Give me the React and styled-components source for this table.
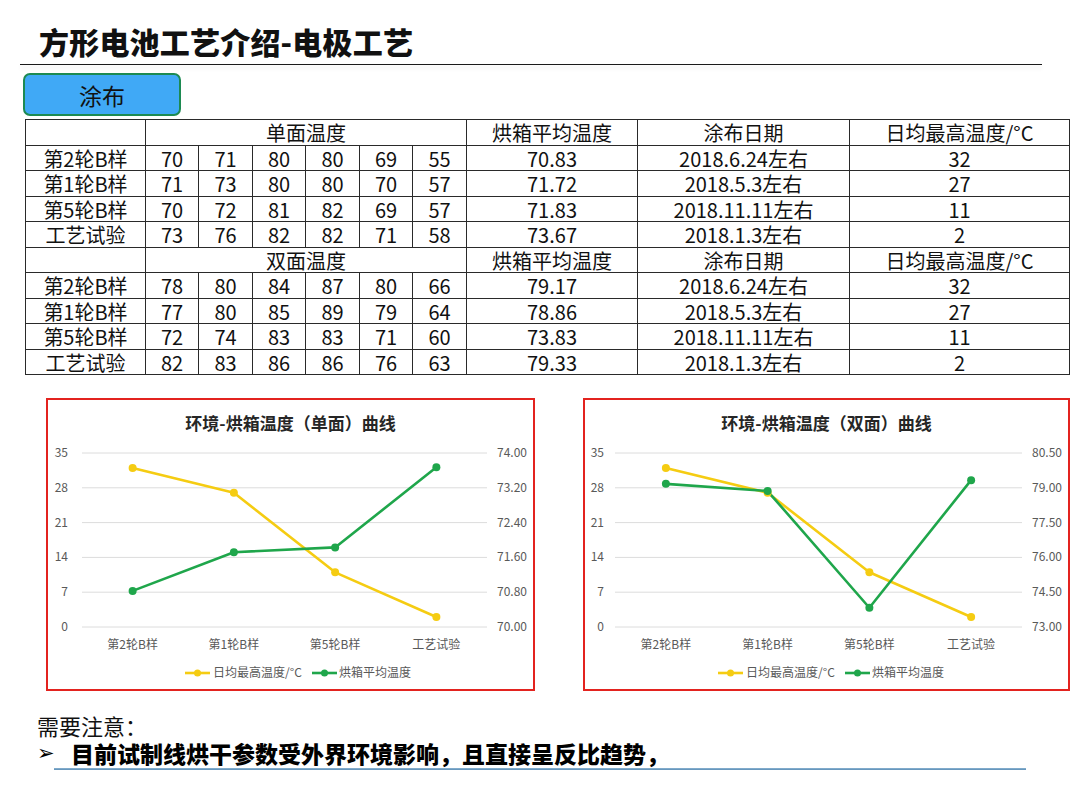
import React from 'react';
import styled, { createGlobalStyle } from 'styled-components';

const GlobalStyle = createGlobalStyle`
  html, body {
    margin: 0;
    padding: 0;
    background: #fff;
  }
  body {
    font-family: "Noto Sans CJK SC", "Noto Sans", sans-serif;
    color: #000;
  }
`;

const Page = styled.div`
  width: 1080px;
  height: 810px;
  overflow: hidden;
  background: #fff;
`;

const Title = styled.h1`
  margin: 0;
  padding: 21px 0 0 39px;
  font-size: 30px;
  line-height: 40px;
  font-weight: 900;
  letter-spacing: 0.2px;
  color: #111;
`;

const Rule = styled.div`
  margin: 3px 0 0 20px;
  width: 1022px;
  height: 0;
  border-top: 1.5px solid #1a1a1a;
  box-shadow: 0 3px 4px rgba(0, 0, 0, 0.14);
`;

const Tab = styled.div`
  margin: 8px 0 0 23px;
  width: 158px;
  height: 43px;
  box-sizing: border-box;
  display: flex;
  align-items: center;
  justify-content: center;
  background: #40a9f6;
  border: 2px solid #1d8a52;
  border-radius: 7px;
  font-size: 23px;
  color: #111;
`;

const Table = styled.table`
  margin: 3px 0 0 25px;
  width: 1044px;
  border-collapse: collapse;
  table-layout: fixed;
  font-size: 20px;
  line-height: 1;
  color: #111;

  tr {
    height: 25.5px;
  }
  td {
    border: 1px solid #2a2a2a;
    padding: 2px 0 0;
    text-align: center;
    white-space: nowrap;
  }
`;

const ChartsRow = styled.div`
  display: flex;
  gap: 48px;
  margin: 23px 0 0 46px;
`;

const ChartBox = styled.div`
  width: ${(p) => p.$w}px;
  height: 293px;
  box-sizing: border-box;
  border: 2px solid #e3231f;
  background: #fff;

  svg {
    display: block;
  }
`;

const ChartTitle = styled.text`
  font-size: 17px;
  font-weight: 700;
  fill: #262626;
`;

const AxisLabel = styled.text`
  font-size: 12px;
  fill: #595959;
`;

const Notes = styled.div`
  margin: 20px 0 0 37px;
`;

const NoteHead = styled.div`
  font-size: 22px;
  line-height: 28px;
  color: #111;
`;

const Bullet = styled.div`
  display: flex;
  align-items: center;
  height: 28px;
  font-size: 23px;
  font-weight: 900;
  color: #000;
`;

const Arrow = styled.span`
  width: 34px;
  font-family: "DejaVu Sans", sans-serif;
  font-size: 21px;
  font-weight: 400;
  line-height: 1;
`;

const Underline = styled.div`
  margin: 1px 0 0 17px;
  width: 972px;
  height: 2px;
  background: linear-gradient(#8db4d2, #5b8db6);
`;

const YELLOW = '#f5cc12';
const GREEN = '#1fa64b';
const categories = ['第2轮B样', '第1轮B样', '第5轮B样', '工艺试验'];
const dailyMax = [32, 27, 11, 2];

function LineChart({ width, title, rightTicks, rightMin, rightMax, oven, frame }) {
  const { x0, x1, y0, y1, leftEnd, rightStart, legendX } = frame;
  const leftTicks = [0, 7, 14, 21, 28, 35];
  const yL = (v) => y1 - (v / 35) * (y1 - y0);
  const yR = (v) => y1 - ((v - rightMin) / (rightMax - rightMin)) * (y1 - y0);
  const step = (x1 - x0) / 4;
  const cx = (i) => x0 + step * (i + 0.5);
  const yellowPts = dailyMax.map((v, i) => `${cx(i)},${yL(v)}`).join(' ');
  const greenPts = oven.map((v, i) => `${cx(i)},${yR(v)}`).join(' ');

  return (
    <ChartBox $w={width}>
      <svg width={width - 4} height={289}>
        <ChartTitle x={(width - 4) / 2} y={30} textAnchor="middle">
          {title}
        </ChartTitle>
        {leftTicks.map((t, i) => {
          const y = yL(t);
          return (
            <g key={t}>
              <line x1={x0} x2={x1} y1={y} y2={y} stroke="#dcdcdc" strokeWidth="1" />
              <AxisLabel x={leftEnd} y={y + 4} textAnchor="end">
                {t}
              </AxisLabel>
              <AxisLabel x={rightStart} y={y + 4}>
                {rightTicks[i]}
              </AxisLabel>
            </g>
          );
        })}
        {categories.map((c, i) => (
          <AxisLabel key={c} x={cx(i)} y={249} textAnchor="middle">
            {c}
          </AxisLabel>
        ))}
        <polyline points={yellowPts} fill="none" stroke={YELLOW} strokeWidth="2.6" strokeLinejoin="round" />
        <polyline points={greenPts} fill="none" stroke={GREEN} strokeWidth="2.6" strokeLinejoin="round" />
        {dailyMax.map((v, i) => (
          <circle key={'y' + i} cx={cx(i)} cy={yL(v)} r="4" fill={YELLOW} />
        ))}
        {oven.map((v, i) => (
          <circle key={'g' + i} cx={cx(i)} cy={yR(v)} r="4" fill={GREEN} />
        ))}
        <g transform={`translate(${legendX}, 273)`}>
          <line x1="0" x2="25" y1="0" y2="0" stroke={YELLOW} strokeWidth="2.6" />
          <circle cx="12.5" cy="0" r="3.5" fill={YELLOW} />
          <AxisLabel x="28" y="4">日均最高温度/°C</AxisLabel>
          <line x1="127" x2="152" y1="0" y2="0" stroke={GREEN} strokeWidth="2.6" />
          <circle cx="139.5" cy="0" r="3.5" fill={GREEN} />
          <AxisLabel x="154" y="4">烘箱平均温度</AxisLabel>
        </g>
      </svg>
    </ChartBox>
  );
}

const singleRows = [
  ['第2轮B样', 70, 71, 80, 80, 69, 55, '70.83', '2018.6.24左右', 32],
  ['第1轮B样', 71, 73, 80, 80, 70, 57, '71.72', '2018.5.3左右', 27],
  ['第5轮B样', 70, 72, 81, 82, 69, 57, '71.83', '2018.11.11左右', 11],
  ['工艺试验', 73, 76, 82, 82, 71, 58, '73.67', '2018.1.3左右', 2],
];

const doubleRows = [
  ['第2轮B样', 78, 80, 84, 87, 80, 66, '79.17', '2018.6.24左右', 32],
  ['第1轮B样', 77, 80, 85, 89, 79, 64, '78.86', '2018.5.3左右', 27],
  ['第5轮B样', 72, 74, 83, 83, 71, 60, '73.83', '2018.11.11左右', 11],
  ['工艺试验', 82, 83, 86, 86, 76, 63, '79.33', '2018.1.3左右', 2],
];

const colWidths = [120, 53, 54, 53, 54, 53, 54, 171, 212, 220];

function HeadRow({ label }) {
  return (
    <tr>
      <td />
      <td colSpan={6}>{label}</td>
      <td>烘箱平均温度</td>
      <td>涂布日期</td>
      <td>日均最高温度/°C</td>
    </tr>
  );
}

function DataRows({ rows }) {
  return rows.map((r) => (
    <tr key={r[0] + r[7]}>
      {r.map((v, i) => (
        <td key={i}>{v}</td>
      ))}
    </tr>
  ));
}

export default function App() {
  return (
    <Page>
      <GlobalStyle />
      <Title>方形电池工艺介绍-电极工艺</Title>
      <Rule />
      <Tab>涂布</Tab>
      <Table>
        <colgroup>
          {colWidths.map((w, i) => (
            <col key={i} style={{ width: w }} />
          ))}
        </colgroup>
        <tbody>
          <HeadRow label="单面温度" />
          <DataRows rows={singleRows} />
          <HeadRow label="双面温度" />
          <DataRows rows={doubleRows} />
        </tbody>
      </Table>
      <ChartsRow>
        <LineChart
          width={489}
          title="环境-烘箱温度（单面）曲线"
          rightTicks={['70.00', '70.80', '71.60', '72.40', '73.20', '74.00']}
          rightMin={70}
          rightMax={74}
          oven={[70.83, 71.72, 71.83, 73.67]}
          frame={{ x0: 34, x1: 439, y0: 53, y1: 227, leftEnd: 20, rightStart: 449, legendX: 137 }}
        />
        <LineChart
          width={487}
          title="环境-烘箱温度（双面）曲线"
          rightTicks={['73.00', '74.50', '76.00', '77.50', '79.00', '80.50']}
          rightMin={73}
          rightMax={80.5}
          oven={[79.17, 78.86, 73.83, 79.33]}
          frame={{ x0: 30, x1: 437, y0: 53, y1: 227, leftEnd: 19, rightStart: 447, legendX: 133 }}
        />
      </ChartsRow>
      <Notes>
        <NoteHead>需要注意：</NoteHead>
        <Bullet>
          <Arrow>➢</Arrow>
          目前试制线烘干参数受外界环境影响，且直接呈反比趋势，
        </Bullet>
        <Underline />
      </Notes>
    </Page>
  );
}
